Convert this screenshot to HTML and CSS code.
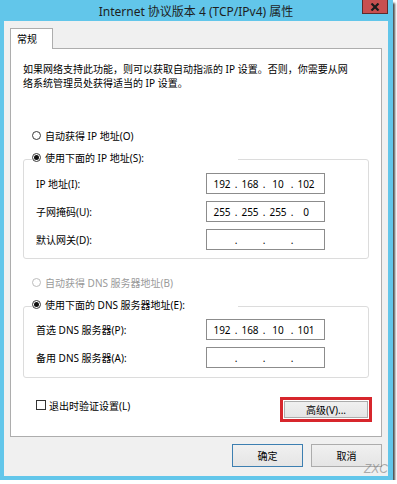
FILE: index.html
```html
<!DOCTYPE html>
<html lang="zh-CN">
<head>
    <meta charset="UTF-8">
    <title>Internet 协议版本 4 (TCP/IPv4) 属性</title>
    <link rel="stylesheet" href="styles.css">
</head>
<body>
    <div class="window">
        <div class="titlebar">
            <span class="title">Internet 协议版本 4 (TCP/IPv4) 属性</span>
            <button class="close" aria-label="关闭">
                <svg width="10" height="8" viewBox="0 0 10 8">
                    <path d="M1.5 0.5 L8.5 7.5 M8.5 0.5 L1.5 7.5" stroke="#1c1c1c" stroke-width="2.2" fill="none"/>
                </svg>
            </button>
        </div>

        <div class="client">
            <!-- Tab strip -->
            <div class="tabs">
                <div class="tab">常规</div>
            </div>

            <div class="tab-page">
                <p class="intro">如果网络支持此功能，则可以获取自动指派的 IP 设置。否则，你需要从网<br>络系统管理员处获得适当的 IP 设置。</p>

                <div class="option first">
                    <span class="radio"></span>
                    <span>自动获得 IP 地址(O)</span>
                </div>

                <fieldset class="group ip-group">
                    <legend>
                        <span class="option">
                            <span class="radio checked"></span>
                            <span>使用下面的 IP 地址(S):</span>
                        </span>
                    </legend>
                    <div class="field-row">
                        <span>IP 地址(I):</span>
                        <div class="ip-box"><span>192</span><span>.</span><span>168</span><span>.</span><span>10</span><span>.</span><span>102</span></div>
                    </div>
                    <div class="field-row">
                        <span>子网掩码(U):</span>
                        <div class="ip-box"><span>255</span><span>.</span><span>255</span><span>.</span><span>255</span><span>.</span><span>0</span></div>
                    </div>
                    <div class="field-row">
                        <span>默认网关(D):</span>
                        <div class="ip-box"><span></span><span>.</span><span></span><span>.</span><span></span><span>.</span><span></span></div>
                    </div>
                </fieldset>

                <div class="option disabled dns-auto">
                    <span class="radio"></span>
                    <span>自动获得 DNS 服务器地址(B)</span>
                </div>

                <fieldset class="group dns-group">
                    <legend>
                        <span class="option">
                            <span class="radio checked"></span>
                            <span>使用下面的 DNS 服务器地址(E):</span>
                        </span>
                    </legend>
                    <div class="field-row">
                        <span>首选 DNS 服务器(P):</span>
                        <div class="ip-box"><span>192</span><span>.</span><span>168</span><span>.</span><span>10</span><span>.</span><span>101</span></div>
                    </div>
                    <div class="field-row">
                        <span>备用 DNS 服务器(A):</span>
                        <div class="ip-box"><span></span><span>.</span><span></span><span>.</span><span></span><span>.</span><span></span></div>
                    </div>
                </fieldset>

                <div class="footer-row">
                    <div class="check-option">
                        <span class="checkbox"></span>
                        <span>退出时验证设置(L)</span>
                    </div>
                    <button class="btn advanced">高级(V)...</button>
                </div>
            </div>

            <!-- Dialog buttons -->
            <div class="dialog-buttons">
                <button class="btn default">确定</button>
                <button class="btn">取消</button>
            </div>
        </div>

        <div class="watermark">ZXC</div>
    </div>
</body>
</html>
```

FILE: styles.css
```css
/* Page */
body {
    margin: 0;
    background: #fff;
    font-family: "Noto Sans", "Noto Sans CJK SC", sans-serif;
    font-size: 10px;
    color: #000;
}

/* Window frame */
.window {
    position: relative;
    width: 393px;
    height: 480px;
    box-sizing: border-box;
    padding: 0 5px 4px 4px;
    background: #62c6ea;
    display: flex;
    flex-direction: column;
    box-shadow: 2px 3px 2px rgba(0, 0, 0, 0.7);
}

.titlebar {
    height: 21px;
    flex: none;
    display: flex;
    align-items: center;
    justify-content: center;
    font-size: 12px;
    color: #1e1e1e;
}

.close {
    position: absolute;
    top: 0;
    right: 5px;
    width: 26px;
    height: 14px;
    padding: 0;
    box-sizing: border-box;
    background: #c75050;
    border: 1px solid #5e2b2b;
    border-top: none;
    display: flex;
    align-items: center;
    justify-content: center;
}

/* Client area */
.client {
    flex: 1;
    background: #f0f0f0;
    padding: 7px 6px 9px;
    display: flex;
    flex-direction: column;
}

.tabs {
    display: flex;
    height: 21px;
    margin-bottom: -1px;
    position: relative;
    z-index: 1;
}

.tab {
    width: 43px;
    box-sizing: border-box;
    background: #fff;
    border: 1px solid #adadad;
    border-bottom: none;
    padding-left: 6px;
    line-height: 20px;
}

.tab-page {
    flex: 1;
    background: #fff;
    border: 1px solid #adadad;
    padding: 13px 12px 0;
}

.intro {
    margin: 0;
    line-height: 14px;
}

/* Radio options */
.option {
    display: flex;
    align-items: center;
    gap: 4px;
    height: 14px;
}

.option.first {
    margin-top: 38px;
    padding-left: 9px;
}

.option.dns-auto {
    margin-top: 16px;
    padding-left: 9px;
}

.option.disabled {
    color: #9a9a9a;
}

.radio {
    width: 9px;
    height: 9px;
    box-sizing: border-box;
    border: 1px solid #3c3c3c;
    border-radius: 50%;
    background: #fff;
    display: flex;
    align-items: center;
    justify-content: center;
}

.radio.checked::after {
    content: '';
    width: 5px;
    height: 5px;
    border-radius: 50%;
    background: #111;
}

.disabled .radio {
    border-color: #bcbcbc;
}

/* Group boxes */
.group {
    margin: 8px 0 0;
    padding: 5px 43px 8px 12px;
    border: 1px solid #dcdcdc;
    border-radius: 3px;
    min-width: 0;
}

.group legend {
    width: 206px;
    box-sizing: border-box;
    margin-left: -4px;
    padding: 0 0 4px;
}

.dns-group {
    padding-top: 4px;
    padding-bottom: 9px;
}

.field-row {
    display: flex;
    justify-content: space-between;
    align-items: center;
    height: 21px;
}

.field-row + .field-row {
    margin-top: 7px;
}

.ip-box {
    width: 119px;
    height: 21px;
    box-sizing: border-box;
    border: 1px solid #8c8c8c;
    background: #fff;
    padding-left: 4px;
    display: grid;
    grid-template-columns: 22px 6px 22px 6px 22px 6px 22px;
    align-items: center;
    text-align: center;
}

/* Footer with checkbox and advanced button */
.footer-row {
    display: flex;
    justify-content: space-between;
    align-items: flex-start;
    margin-top: 20px;
    padding: 0 1px 0 13px;
}

.check-option {
    display: flex;
    align-items: center;
    gap: 3px;
    height: 14px;
}

.checkbox {
    width: 10px;
    height: 10px;
    box-sizing: border-box;
    border: 1px solid #333;
    background: #fff;
}

/* Buttons */
.btn {
    font: inherit;
    color: #000;
    padding: 0;
    border: 1px solid #acacac;
    background: linear-gradient(#f0f0f0, #e5e5e5);
    cursor: pointer;
}

.advanced {
    width: 84px;
    height: 17px;
    margin-top: 3px;
    outline: 3px solid #d7262c;
    outline-offset: 1px;
}

.dialog-buttons {
    display: flex;
    justify-content: flex-end;
    gap: 8px;
    margin-top: 7px;
    height: 23px;
}

.dialog-buttons .btn {
    width: 71px;
}

.btn.default {
    border-color: #3c7fb1;
}

.watermark {
    position: absolute;
    right: 5px;
    bottom: 4px;
    font-family: "Liberation Sans", sans-serif;
    font-size: 12px;
    color: rgba(110, 110, 110, 0.55);
    font-style: italic;
}
```
